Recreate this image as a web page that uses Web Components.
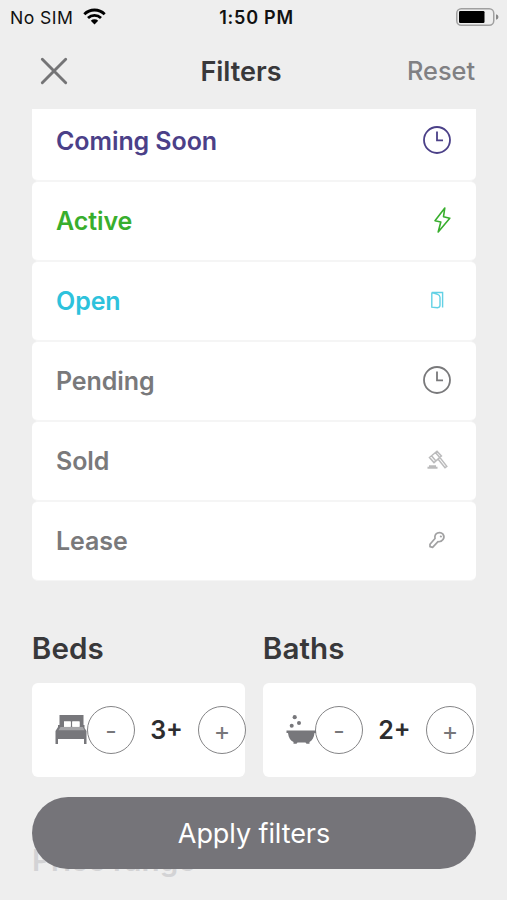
<!DOCTYPE html>
<html lang="en">
<head>
<meta charset="utf-8">
<title>Filters</title>
<style>
html,body{margin:0;height:100%;background:#eeeeee;overflow:hidden}
body{font-family:Inter,"Liberation Sans",sans-serif}
</style>
</head>
<body>
<filter-screen></filter-screen>
<script>
const define = (name, html) => customElements.define(name, class extends HTMLElement {
  constructor() {
    super();
    this.attachShadow({mode: 'open'}).innerHTML = typeof html === 'function' ? html(this) : html;
  }
});

const ICONS = {
  clock: `<circle cx="20" cy="15" r="13" stroke-width="1.8"/><path d="M20 6.5V15.4H26" stroke-width="1.8"/>`,
  bolt: `<path d="M27.8 3 18 15.7 23.8 17 21.2 27 32.8 13.2 26.5 11.7Z" stroke-width="1.6" stroke-linejoin="round"/>`,
  door: `<path d="M14.8 7.5V22.2L20.5 22.8Q23 22.5 23 20.3V12.2Q22.8 10 20.6 9.3L14.8 7.5H25.6V22.6" stroke-width="1.4" opacity=".75"/>`,
  gavel: `<g stroke-width="1.5" opacity=".5"><path d="M12.5 12.5 20 6.2 24.4 11 17 17.6ZM14.5 10.8 18.9 15.9M18.4 7.4 22.8 12.4M21.2 14.3 28 22.8 29.8 21.3 23 12.6"/><path d="M10.5 22.8H20.5M12 21.2H19" stroke-width="2"/></g>`,
  key: `<path d="M18 13.5C17 7.8 23 6 26 9.2 28.7 13 25 17.3 21 16.7L15.6 22.3 13 21.7V19.2ZM23.2 10.8 24.6 12.2" stroke-width="1.7" stroke-linejoin="round" opacity=".7"/>`
};

define('status-bar', `<style>
:host{display:flex;height:34px;align-items:center;justify-content:space-between;padding:0 8px 0 10px;color:#111;font-size:17.6px;box-sizing:border-box;flex:none}
div{display:flex;align-items:center;flex:1;white-space:nowrap}
.l{gap:10px;letter-spacing:.45px}.r{justify-content:flex-end}
b{font-weight:600;font-size:18px;letter-spacing:.75px;margin-left:4px}svg{display:block}.l svg{position:relative;top:-1px}
</style><div class="l"><span>No SIM</span><svg width="23" height="17" viewBox="0 0 23 17" fill="none" stroke="#000" stroke-width="2.8"><path d="M1.3 6.2A14.5 14.5 0 0 1 21.7 6.2M5 10A9.4 9.4 0 0 1 18 10"/><path d="M7.8 12.8A5.4 5.4 0 0 1 15.2 12.8L11.5 16.6Z" fill="#000" stroke="none"/></svg></div>
<b>1:50 PM</b>
<div class="r"><svg width="43" height="18" viewBox="0 0 43 18"><rect x=".75" y=".75" width="37" height="16.5" rx="4.5" fill="none" stroke="#a0a0a0" stroke-width="1.5"/><rect x="3" y="3" width="25.5" height="12" rx="1.2"/><path d="M40 6.3Q42.5 7 42.5 9T40 11.7Z" fill="#888"/></svg></div>`);

define('nav-header', `<style>
:host{display:grid;grid-template-columns:1fr auto 1fr;align-items:center;height:75px;padding:0 32px 2px 40px;box-sizing:border-box;flex:none}
h1{margin:0;font-size:27px;font-weight:600;color:#38383a;line-height:32px;transform:translate(-16.5px,1px)}
span{justify-self:end;font-size:25.3px;font-weight:500;color:#808083}svg{display:block}
</style><svg width="28" height="28" viewBox="0 0 28 28" fill="none" stroke="#747476" stroke-width="2.9" stroke-linecap="round"><path d="M2.3 2.3 25.7 25.7M25.7 2.3 2.3 25.7"/></svg>
<h1><slot></slot></h1><span><slot name="action"></slot></span>`);

define('status-row', el => `<style>
:host{display:flex;align-items:center;justify-content:space-between;height:80px;box-sizing:border-box;padding:0 18px 0 24px;background:#fff;border-radius:6px;border-top:1px solid #f5f5f5;border-bottom:1px solid #f5f5f5;font-size:25px;font-weight:570;letter-spacing:-.08px;color:var(--tone,#79797b)}
svg{display:block;fill:none;stroke:currentColor;position:relative;top:-1px}
</style><span><slot></slot></span><svg width="41" height="30" viewBox="0 0 41 30">${ICONS[el.getAttribute('icon')]}</svg>`);

const BED = `<svg width="32" height="31" viewBox="0 0 32 31"><path fill="#77777b" fill-rule="evenodd" d="M4.5 1H28.5V11H29.5V14L31.5 17V30H29V25H3V30H.5V17L3 13V11H4.5ZM9 7.5V12.7H15.7V7.5ZM17.3 7.5V12.7H24.5V7.5Z"/><path d="M5.5 13H27.8L29.6 16.2H3.5Z" fill="#a5a5a8"/><path d="M9 7.5H15.7V12.7H9ZM17.3 7.5H24.5V12.7H17.3Z" fill="#fff"/></svg>`;
const BATH = `<svg width="31" height="31" viewBox="0 0 31 31" fill="#77777b"><path d="M.5 16.5H30V19H28.5C28 23.6 26 26.6 23.5 28V29.8H20.5L19.5 28.5H11.5L10.5 29.8H7.5V28C4.5 26.6 2.5 23.6 2 19H.5Z"/><circle cx="8.7" cy="3.2" r="2.1"/><circle cx="13" cy="9" r="2"/><circle cx="5.7" cy="11.7" r="2"/></svg>`;

define('count-stepper', el => `<style>
:host{display:block;min-width:0}
h2{margin:0;font-size:29.6px;line-height:36px;font-weight:600;color:#38383a;letter-spacing:.1px;text-indent:-.2px}
.card{margin-top:17px;height:94px;background:#fff;border-radius:6px;display:flex;align-items:center;padding-left:23px}
.icon{width:var(--icon-w,32px);flex:none}svg{display:block;position:relative;top:-1px}
.btn{box-sizing:border-box;width:48px;height:48px;border:1.6px solid #858587;border-radius:50%;display:grid;place-items:center;font-size:25px;color:#77777a;flex:none}
.btn span{position:relative;top:1px}
.n{width:63px;text-align:center;font-size:25px;font-weight:600;color:#2d2d2f;flex:none}
</style><h2><slot></slot></h2><div class="card"><div class="icon">${el.getAttribute('icon') === 'bed' ? BED : BATH}</div><div class="btn"><span>-</span></div><div class="n"><slot name="value"></slot></div><div class="btn"><span>+</span></div></div>`);

define('apply-bar', `<style>
:host{position:absolute;left:32px;right:31px;top:796.5px;z-index:2}
button{display:block;width:100%;height:72px;border:0;border-radius:36px;background:#757479;color:#fff;font:400 27px Inter,"Liberation Sans",sans-serif;letter-spacing:-.08px;padding:2px 0 0}
</style><button><slot></slot></button>`);

define('filter-screen', `<style>
:host{display:flex;flex-direction:column;position:relative;width:507px;height:900px;overflow:hidden;background:#eee}
main{flex:1;overflow:hidden;padding:0 31px 0 32px}
.list{margin-top:-8px}
.pair{display:grid;grid-template-columns:213px 213px;column-gap:18px;margin-top:49px}
.next{margin:65px 0 0;font-size:29.6px;line-height:36px;font-weight:600;color:#d3d3d5}
.ends{display:flex;justify-content:space-between;margin-top:21px;font-size:24px;line-height:30px;color:#77777a;padding:0 54px 0 0}
</style><status-bar></status-bar><nav-header>Filters<span slot="action">Reset</span></nav-header>
<main><div class="list">
<status-row icon="clock" style="--tone:#4b4088">Coming Soon</status-row>
<status-row icon="bolt" style="--tone:#38ae2d">Active</status-row>
<status-row icon="door" style="--tone:#2dc2dc">Open</status-row>
<status-row icon="clock">Pending</status-row>
<status-row icon="gavel">Sold</status-row>
<status-row icon="key">Lease</status-row></div>
<div class="pair"><count-stepper icon="bed">Beds<span slot="value">3+</span></count-stepper>
<count-stepper icon="bath" style="--icon-w:29px">Baths<span slot="value">2+</span></count-stepper></div>
<div class="next">Price range</div><div class="ends"><span>$</span><span>$</span></div></main>
<apply-bar>Apply filters</apply-bar>`);
</script>
</body>
</html>
